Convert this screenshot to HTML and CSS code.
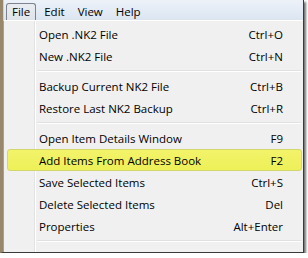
FILE: index.html
```html
<!DOCTYPE html>
<html>
<head>
<meta charset="utf-8">
<link rel="stylesheet" href="styles.css">
</head>
<body>
<div class="window">
  <div class="menubar">
    <span class="mb-item active">File</span>
    <span class="mb-item">Edit</span>
    <span class="mb-item">View</span>
    <span class="mb-item">Help</span>
  </div>
  <div class="menu">
    <div class="item"><span class="label">Open .NK2 File</span><span class="key">Ctrl+O</span></div>
    <div class="item"><span class="label">New .NK2 File</span><span class="key">Ctrl+N</span></div>
    <div class="sep"></div>
    <div class="item"><span class="label">Backup Current NK2 File</span><span class="key">Ctrl+B</span></div>
    <div class="item"><span class="label">Restore Last NK2 Backup</span><span class="key">Ctrl+R</span></div>
    <div class="sep"></div>
    <div class="item"><span class="label">Open Item Details Window</span><span class="key">F9</span></div>
    <div class="item hl"><span class="label">Add Items From Address Book</span><span class="key">F2</span></div>
    <div class="item"><span class="label">Save Selected Items</span><span class="key">Ctrl+S</span></div>
    <div class="item"><span class="label">Delete Selected Items</span><span class="key">Del</span></div>
    <div class="item"><span class="label">Properties</span><span class="key">Alt+Enter</span></div>
    <div class="sep"></div>
    <div class="item"><span class="label">Exit</span><span class="key"></span></div>
  </div>
</div>
</body>
</html>
```
FILE: styles.css
```css
html, body {
  margin: 0;
  padding: 0;
  background: #ffffff;
}
body {
  font-family: "Open Sans", "Noto Sans", sans-serif;
  font-size: 11.5px;
  color: #000;
}
.window {
  width: 300px;
  height: 252px;
  border-left: 3px solid #98876a;
  border-right: 1px solid #3a3a3a;
  border-bottom: 1px solid #3a3a3a;
  box-shadow: 2px 2px 2px rgba(0,0,0,0.55);
  overflow: hidden;
  display: flex;
  flex-direction: column;
  background: #f0f0f0;
}
.menubar {
  height: 20px;
  flex: none;
  display: flex;
  align-items: stretch;
  background: linear-gradient(#edf2f9, #dbe5f1);
  border-left: 1px solid #c9d2dc;
  padding-left: 2px;
  padding-top: 3px;
  box-sizing: border-box;
}
.mb-item {
  display: flex;
  align-items: center;
  padding: 0 5px 0 6px;
  margin-right: 2px;
  line-height: 16px;
}
.mb-item.active {
  border: 1px solid #7d838c;
  border-bottom: none;
  border-radius: 3px 3px 0 0;
  background: linear-gradient(#e9edf2, #dfe4ea);
  padding: 0 5px 0 5px;
  margin-right: 2px;
}
.menu {
  flex: 1;
  border-left: 1px solid #a0a0a0;
  border-top: 1px solid #ffffff;
  padding-top: 2px;
  background:
    linear-gradient(to right, transparent 30px, #e2e3e3 30px, #e2e3e3 31px, #ffffff 31px, #ffffff 32px, transparent 32px),
    #f0f0f0;
}
.item {
  height: 22px;
  display: flex;
  align-items: center;
  justify-content: space-between;
  padding: 0 20px 0 35px;
  box-sizing: border-box;
  white-space: nowrap;
}
.item.hl {
  margin: 0 1px 0 3px;
  padding-left: 31px;
  padding-right: 18px;
  background: linear-gradient(#f2f36a, #eef058);
  border: 1px solid #d3d66a;
  border-radius: 3px;
}
.sep {
  height: 8px;
  margin: 0 2px 0 33px;
  background: linear-gradient(transparent 3px, #e0e0e0 3px, #e0e0e0 4px, #ffffff 4px, #ffffff 5px, transparent 5px);
}
```
